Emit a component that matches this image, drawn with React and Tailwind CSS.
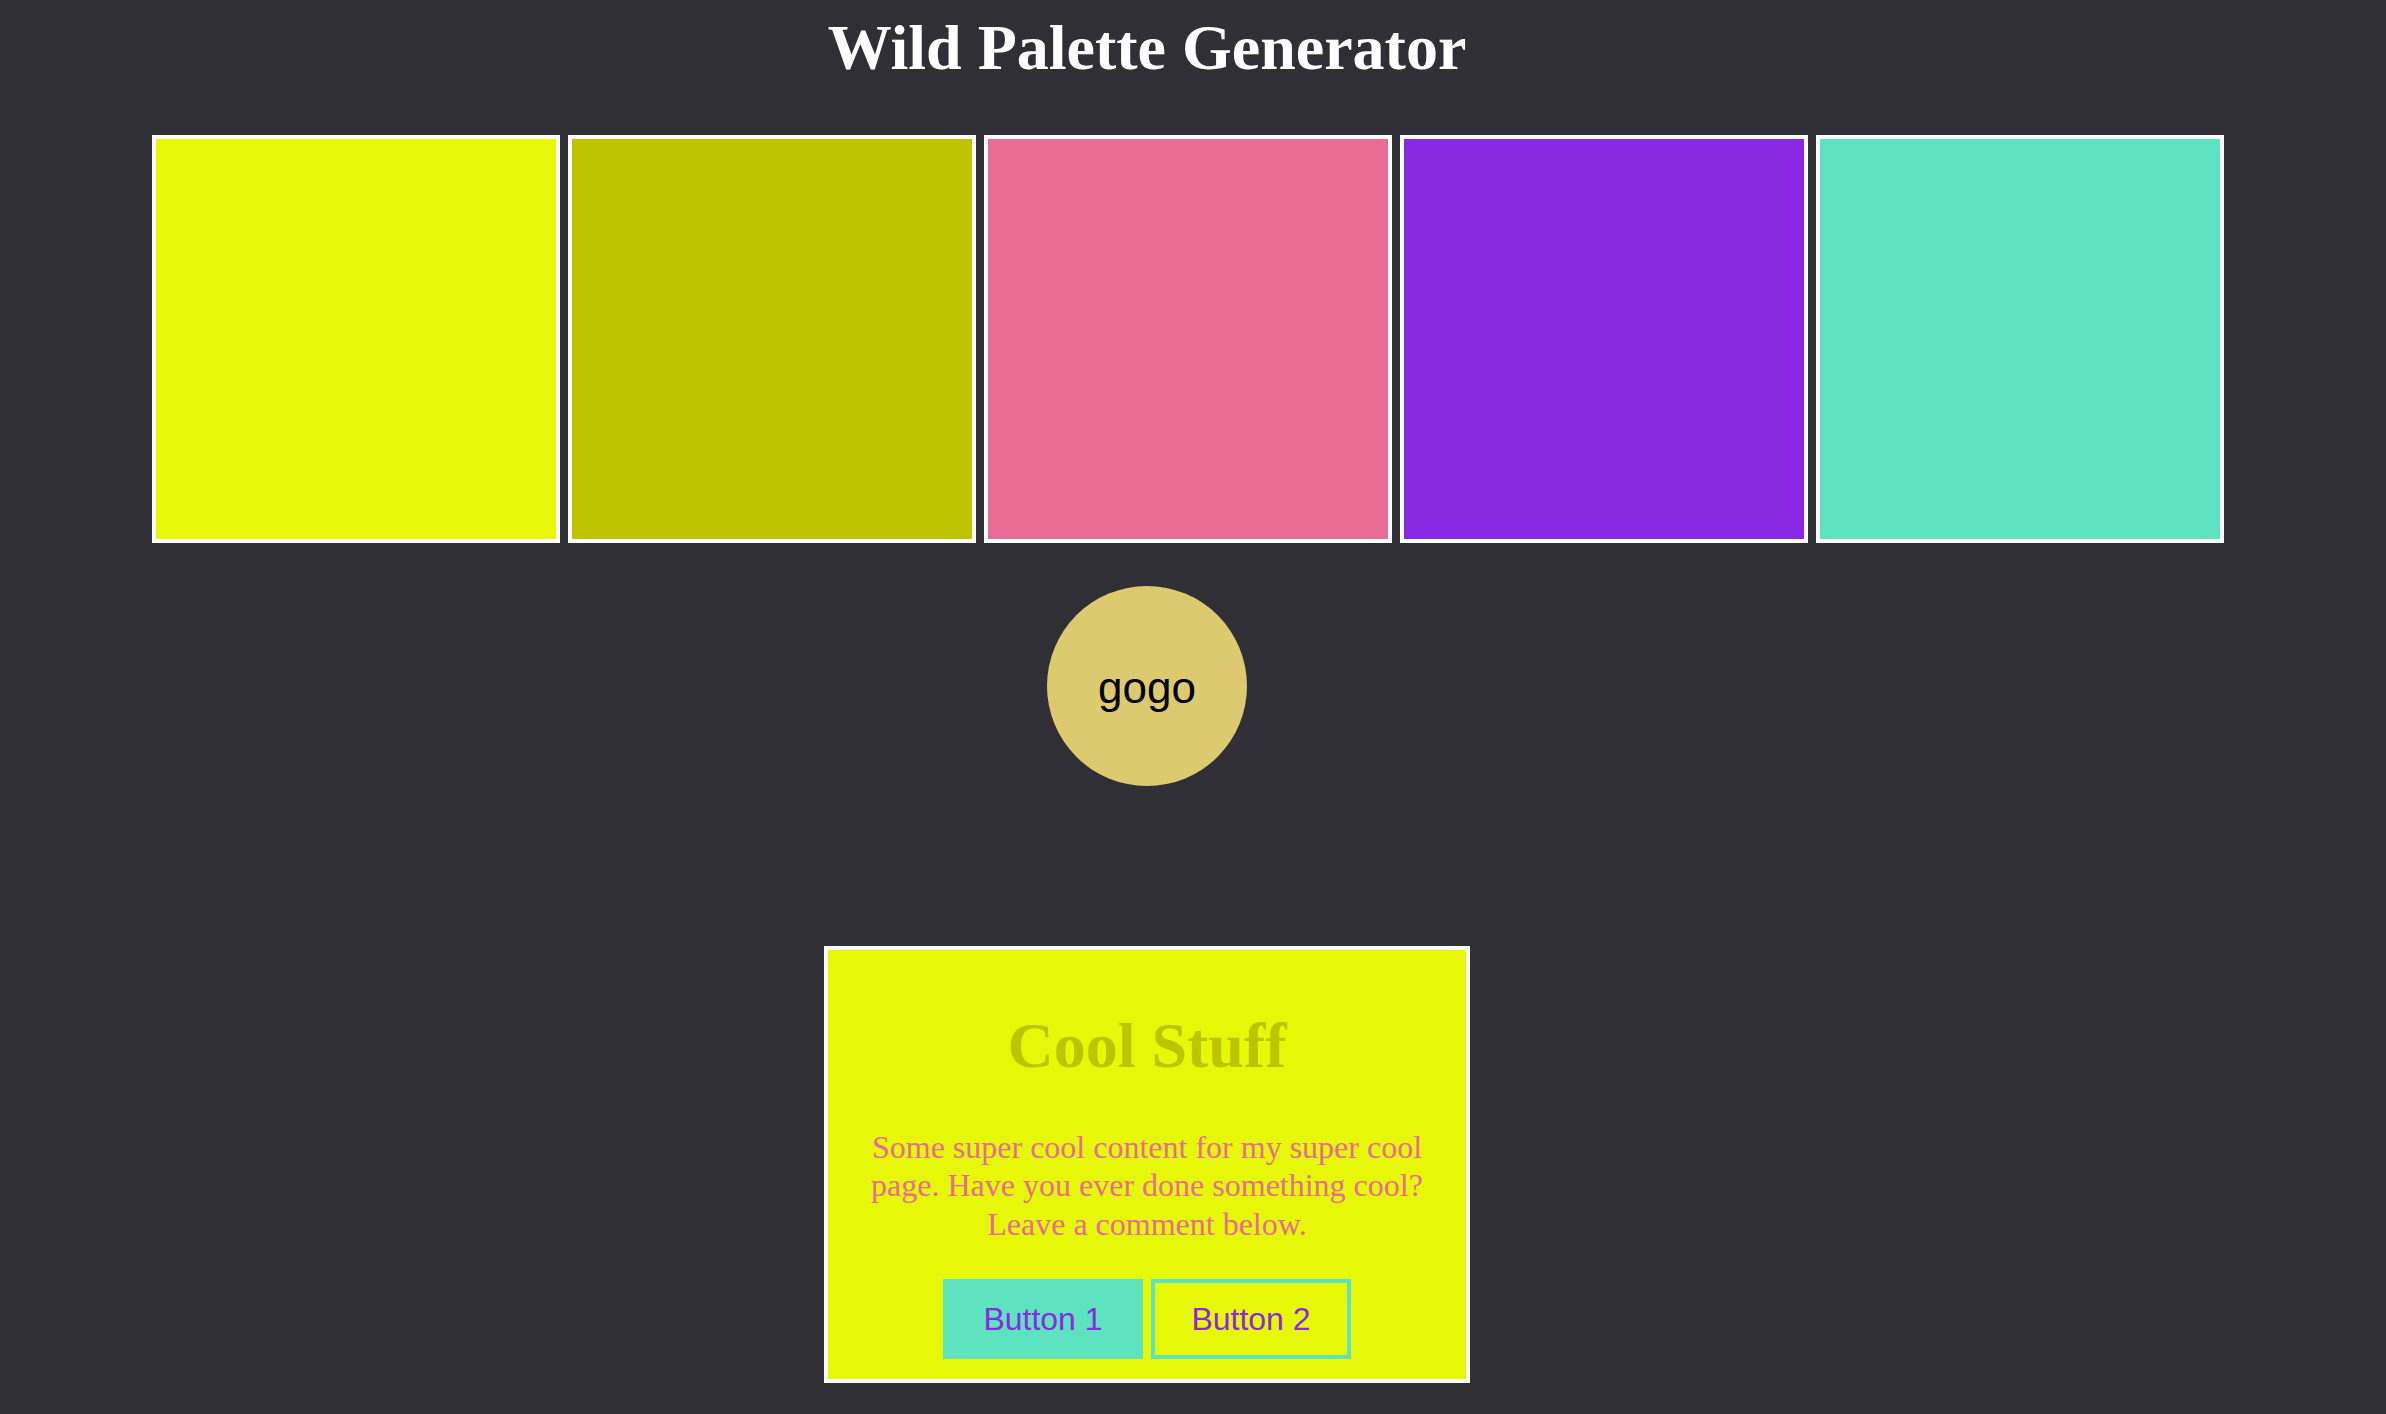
import React from 'react';

const palette = ['#e6f808', '#bec400', '#e86c94', '#8b28e3', '#5de3c0'];

const Swatch = ({ color }) => (
  <div className="w-[408px] h-[408px] border-4 border-white" style={{ backgroundColor: color }} />
);

const App = () => {
  return (
    <div className="min-h-screen w-full bg-[#302f36] font-['Liberation_Serif',serif]">
      <div className="w-[2294px] flex flex-col items-center pb-[31px]">
        <h1 className="mt-4 text-[64px] leading-none font-bold text-white">Wild Palette Generator</h1>

        {/* swatches */}
        <div className="self-start ml-[152px] mt-[55px] flex gap-2">
          {palette.map((c) => (
            <Swatch key={c} color={c} />
          ))}
        </div>

        <button className="mt-[43px] w-[200px] h-[200px] rounded-full bg-[#ddc96f] flex items-center justify-center pt-[4px] font-['Liberation_Sans',sans-serif] text-[44px] text-black">
          gogo
        </button>

        <div className="mt-[160px] w-[646px] border-4 border-white bg-[#e6f808] flex flex-col items-center pt-[64px] pb-5">
          <h2 className="text-[64px] leading-none font-bold text-[#bec400]">Cool Stuff</h2>
          <p className="mt-[50px] text-[32px] leading-[38.4px] text-[#e86c94] text-center whitespace-nowrap">
            Some super cool content for my super cool
            <br />
            page. Have you ever done something cool?
            <br />
            Leave a comment below.
          </p>
          <div className="mt-9 flex gap-2 font-['Liberation_Sans',sans-serif]">
            <button className="w-[200px] h-20 border-4 border-[#5de3c0] bg-[#5de3c0] text-[32px] text-[#8b28e3]">
              Button 1
            </button>
            <button className="w-[200px] h-20 border-4 border-[#5de3c0] text-[32px] text-[#8b28e3]">
              Button 2
            </button>
          </div>
        </div>
      </div>
    </div>
  );
};

export default App;
